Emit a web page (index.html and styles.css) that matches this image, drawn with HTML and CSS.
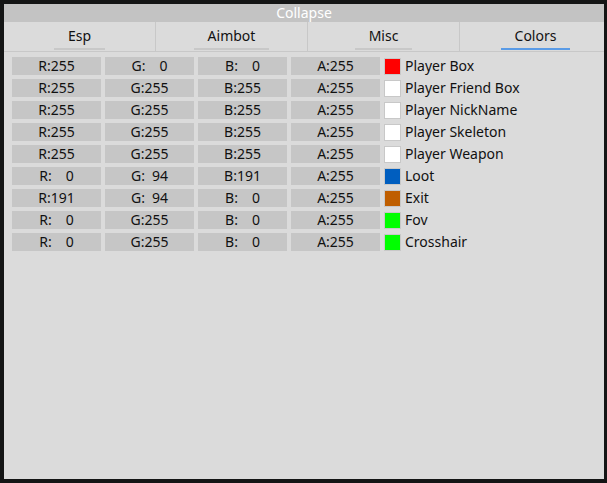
FILE: index.html
```html
<!DOCTYPE html>
<html>
<head>
<meta charset="utf-8">
<link rel="stylesheet" href="styles.css">
</head>
<body>
<div class="window">
  <div class="title">Collapse</div>
  <div class="tabs">
    <div class="tab"><span class="tab-label">Esp</span></div>
    <div class="tab"><span class="tab-label">Aimbot</span></div>
    <div class="tab"><span class="tab-label">Misc</span></div>
    <div class="tab"><span class="tab-label active">Colors</span></div>
  </div>
  <div class="rows">
    <div class="row"><div class="cell">R:255</div><div class="cell">G:&#8194;&#8194;0</div><div class="cell">B:&#8194;&#8194;0</div><div class="cell">A:255</div><div class="swatch" style="background:#ff0000"></div><div class="label">Player Box</div></div>
    <div class="row"><div class="cell">R:255</div><div class="cell">G:255</div><div class="cell">B:255</div><div class="cell">A:255</div><div class="swatch" style="background:#ffffff"></div><div class="label">Player Friend Box</div></div>
    <div class="row"><div class="cell">R:255</div><div class="cell">G:255</div><div class="cell">B:255</div><div class="cell">A:255</div><div class="swatch" style="background:#ffffff"></div><div class="label">Player NickName</div></div>
    <div class="row"><div class="cell">R:255</div><div class="cell">G:255</div><div class="cell">B:255</div><div class="cell">A:255</div><div class="swatch" style="background:#ffffff"></div><div class="label">Player Skeleton</div></div>
    <div class="row"><div class="cell">R:255</div><div class="cell">G:255</div><div class="cell">B:255</div><div class="cell">A:255</div><div class="swatch" style="background:#ffffff"></div><div class="label">Player Weapon</div></div>
    <div class="row"><div class="cell">R:&#8194;&#8194;0</div><div class="cell">G:&#8194;94</div><div class="cell">B:191</div><div class="cell">A:255</div><div class="swatch" style="background:#005ebf"></div><div class="label">Loot</div></div>
    <div class="row"><div class="cell">R:191</div><div class="cell">G:&#8194;94</div><div class="cell">B:&#8194;&#8194;0</div><div class="cell">A:255</div><div class="swatch" style="background:#bf5e00"></div><div class="label">Exit</div></div>
    <div class="row"><div class="cell">R:&#8194;&#8194;0</div><div class="cell">G:255</div><div class="cell">B:&#8194;&#8194;0</div><div class="cell">A:255</div><div class="swatch" style="background:#00ff00"></div><div class="label">Fov</div></div>
    <div class="row"><div class="cell">R:&#8194;&#8194;0</div><div class="cell">G:255</div><div class="cell">B:&#8194;&#8194;0</div><div class="cell">A:255</div><div class="swatch" style="background:#00ff00"></div><div class="label">Crosshair</div></div>
  </div>
</div>
</body>
</html>
```
FILE: styles.css
```css
html, body {
  margin: 0;
  padding: 0;
}
body {
  background: #141515;
  width: 607px;
  height: 483px;
  overflow: hidden;
  font-family: "Noto Sans", "Open Sans", sans-serif;
  font-size: 14px;
  color: #111;
}
.window {
  margin: 4px 0 0 4px;
  width: 600px;
  height: 475px;
  background: #dbdbdb;
  overflow: hidden;
}
.title {
  height: 18px;
  line-height: 18px;
  background: #c3c3c3;
  color: #fff;
  text-align: center;
}
.tabs {
  display: flex;
  height: 29px;
  border-bottom: 1px solid #c8c8c8;
}
.tab {
  flex: 0 0 152px;
  box-sizing: border-box;
  border-right: 1px solid #c8c8c8;
  display: flex;
  justify-content: center;
  align-items: flex-end;
}
.tab-label {
  padding: 0 14px 0;
  line-height: 24px;
  border-bottom: 2px solid #c8c8c8;
  margin-bottom: 1px;
}
.tab-label.active {
  border-bottom-color: #5a9be6;
}
.rows {
  padding: 5px 0 0 8px;
  display: flex;
  flex-direction: column;
  gap: 4px;
}
.row {
  display: flex;
  align-items: center;
  height: 18px;
}
.cell {
  width: 89px;
  height: 18px;
  line-height: 18px;
  margin-right: 4px;
  background: #c6c6c6;
  text-align: center;
  white-space: pre;
}
.swatch {
  width: 15px;
  height: 15px;
  border: 1px solid #c8c8c8;
  margin-right: 4px;
}
.label {
  line-height: 18px;
  white-space: nowrap;
}
```
